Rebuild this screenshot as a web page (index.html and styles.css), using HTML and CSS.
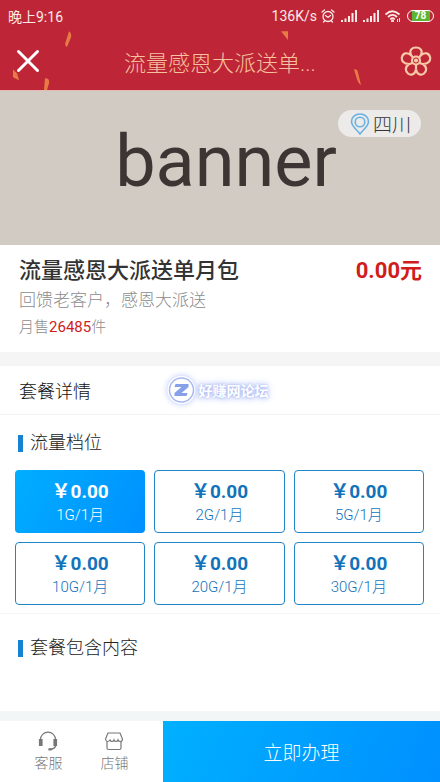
FILE: index.html
```html
<!DOCTYPE html>
<html lang="zh-CN">
<head>
<meta charset="utf-8">
<meta name="viewport" content="width=device-width, initial-scale=1">
<title>流量感恩大派送单月包</title>
<link rel="stylesheet" href="styles.css">
</head>
<body>
<header class="top">
  <svg class="confetti" viewBox="0 0 440 92" preserveAspectRatio="none" aria-hidden="true">
    <path d="M69 32q3 2 2 6l-4 10q-3-2-1-6zM13 71l4 4 2 7-6-3zM45 80q5 0 4 5l-2 7h-3zM281 32h7v9zM354 71q3-1 4 3l3 13q-3-2-4-6z"/>
  </svg>
  <div class="status">
    <span>晚上9:16</span>
    <div class="indicators">
      <span>136K/s</span>
      <svg width="14" height="14" viewBox="0 0 14 14" fill="none" stroke="currentColor" stroke-width="1.300" stroke-linecap="round" aria-hidden="true"><circle cx="7" cy="7.5" r="5"/><path d="M1 3l2.500-2M13 3l-2.500-2M4.500 6.500L7 8.500l2.500-2M3.500 12l-1 1M10.500 12l1 1"/></svg>
      <svg width="16" height="12" viewBox="0 0 16 12" fill="currentColor" aria-hidden="true"><path d="M0 10h2v2H0zM3.500 8.500h2V12h-2zM7 6h2v6H7zM10.500 3h2v9h-2zM14 0h2v12h-2z"/></svg>
      <svg width="16" height="12" viewBox="0 0 16 12" fill="currentColor" aria-hidden="true"><path d="M0 10h2v2H0zM3.500 8.500h2V12h-2zM7 6h2v6H7zM10.500 3h2v9h-2zM14 0h2v12h-2z"/></svg>
      <svg width="16" height="12" viewBox="0 0 16 12" fill="none" stroke="currentColor" stroke-width="1.800" aria-hidden="true"><path d="M.5 4.500Q7.500-2 14.500 4.500M3 7q4.500-4.200 9 0M5.300 9.300q2.200-2 4.400 0"/><circle cx="7.500" cy="11" r=".6"/><path stroke-width="1" d="M12.500 9v3M14.500 8v4"/></svg>
      <span class="battery">78</span>
    </div>
  </div>
  <div class="nav">
    <button class="icon-button" aria-label="关闭">
      <svg width="24" height="24" viewBox="0 0 24 24" fill="none" stroke="#fff" stroke-width="3" stroke-linecap="round"><path d="M2.500 2.500l19 19M21.500 2.500l-19 19"/></svg>
    </button>
    <h1>流量感恩大派送单...</h1>
    <button class="icon-button" aria-label="更多">
      <svg width="32" height="30" viewBox="0 0 32 30" fill="none" stroke="#f8c9a6" stroke-width="2.200"><path d="M11 9C9 4 12 1.500 16 1.500S23 4 21 9C25 6 29 7 30 11s-2 7-7 7c4 3 4 7 1 9.500s-7 1-8-4c-1 5-5 6.500-8 4S5 21 9 18c-5 0-8-3-7-7s5-5 9-2z"/><path d="M11 9l2 3M21 9l-2 3M23 18l-4-1M16 23.500V19M9 18l4-1"/><circle cx="16" cy="14.500" r="4"/><circle cx="16" cy="14.500" r="1"/></svg>
    </button>
  </div>
</header>

<main>
  <section class="banner">
    <span class="banner-text">banner</span>
    <button class="region">
      <svg width="20" height="22" viewBox="0 0 20 22" fill="none" stroke="#6ab2e2" stroke-width="1.600" aria-hidden="true"><path d="M10 21C7 16.500 1.500 13.500 1.500 8.500a8.500 7.500 0 0 1 17 0C18.500 13.500 13 16.500 10 21z"/><circle cx="10" cy="9" r="4.800"/></svg>
      四川
    </button>
  </section>

  <section class="summary">
    <div class="summary-head">
      <h2>流量感恩大派送单月包</h2>
      <strong class="price">0.00元</strong>
    </div>
    <p class="slogan">回馈老客户，感恩大派送</p>
    <p class="sales">月售<em>26485</em>件</p>
  </section>

  <section class="details">
    <div class="details-head">
      <h2>套餐详情</h2>
      <div class="watermark">
        <svg width="28" height="28" viewBox="0 0 28 28" aria-hidden="true"><circle cx="14" cy="14" r="12" fill="#fff" stroke="#a9b8f2" stroke-width="1.500"/><path d="M8 8h13v3l-7 6h6l-1 3H7v-3l7-6H7z" fill="#86a0ea"/></svg>
        <span>好赚网论坛</span>
      </div>
    </div>
    <div class="block">
      <h3>流量档位</h3>
      <div class="tiers">
        <button class="tier selected" aria-pressed="true"><b>￥0.00</b><span>1G/1月</span></button>
        <button class="tier"><b>￥0.00</b><span>2G/1月</span></button>
        <button class="tier"><b>￥0.00</b><span>5G/1月</span></button>
        <button class="tier"><b>￥0.00</b><span>10G/1月</span></button>
        <button class="tier"><b>￥0.00</b><span>20G/1月</span></button>
        <button class="tier"><b>￥0.00</b><span>30G/1月</span></button>
      </div>
    </div>
    <div class="block">
      <h3>套餐包含内容</h3>
    </div>
  </section>
</main>

<footer class="actions">
  <div class="links">
    <a href="#service">
      <svg width="20" height="20" viewBox="0 0 20 20" fill="none" stroke="currentColor" stroke-width="1.200" aria-hidden="true"><path d="M2.500 9C2.500-1.500 17.500-1.500 17.500 9M18 14q-1 4-6 4.500"/><path fill="currentColor" d="M1.500 8.500h2.500v6H1.500zM16 8.500h2.500v6H16zM11 17.800h2v1h-2z"/></svg>
      客服
    </a>
    <a href="#shop">
      <svg width="20" height="20" viewBox="0 0 20 20" fill="none" stroke="currentColor" stroke-width="1.200" aria-hidden="true"><path d="M4 2h12l2.500 6q0 2.500-2 2.500T14 9q-.5 1.500-2 1.500T10 9q-.5 1.500-2 1.500T6 9q-1 1.500-2.500 1.500t-2-2.500zM3 10.500V17q0 1.500 1.500 1.500h11q1.500 0 1.500-1.500v-6.500"/></svg>
      店铺
    </a>
  </div>
  <button class="order">立即办理</button>
</footer>
</body>
</html>
```
FILE: styles.css
```css
* {
  box-sizing: border-box;
}

body {
  margin: 0;
  min-height: 100vh;
  display: flex;
  flex-direction: column;
  background: #fff;
  color: #333;
  font-family: Roboto, "Noto Sans CJK SC", sans-serif;
  font-weight: 300;
}

button {
  margin: 0;
  padding: 0;
  border: 0;
  background: none;
  color: inherit;
  font: inherit;
}

h1, h2, h3, p {
  margin: 0;
}

svg {
  display: block;
  flex: none;
}

.top {
  position: relative;
  background: #be2637;
  border-bottom: 1px solid #e4b9b4;
}

.confetti {
  position: absolute;
  width: 100%;
  height: 100%;
  fill: #e77b45;
}

.status {
  position: relative;
  display: flex;
  justify-content: space-between;
  align-items: center;
  height: 31px;
  padding: 0 6px 0 8px;
  color: #fbe9e8;
  font-size: 14px;
  font-weight: 400;
}

.indicators {
  display: flex;
  align-items: center;
  gap: 6px;
}

.indicators > :first-child {
  margin-right: -2px;
}

.battery {
  width: 27px;
  border: 1px solid #fff;
  border-radius: 6px;
  background: linear-gradient(90deg, #be2637 4px, #5cb531 4px 22px, #be2637 22px);
  color: #fff;
  font-size: 10px;
  font-weight: 700;
  line-height: 10px;
  text-align: center;
}

.nav {
  position: relative;
  display: flex;
  justify-content: space-between;
  align-items: center;
  height: 59px;
  padding: 0 8px 0 16px;
}

.nav h1 {
  color: #f6c19f;
  font-size: 22px;
  font-weight: 300;
}

.banner {
  position: relative;
  display: flex;
  justify-content: center;
  height: 154px;
  padding: 31px 0 0 12px;
  background: #d1cbc3;
}

.banner-text {
  color: #3c3534;
  font-size: 72px;
  font-weight: 400;
  line-height: 80px;
}

.region {
  position: absolute;
  top: 19px;
  right: 19px;
  display: flex;
  align-items: center;
  gap: 3px;
  height: 27px;
  padding: 0 10px 0 12px;
  border-radius: 14px;
  background: #ecebe9;
  font-size: 19px;
}

.summary {
  padding: 11px 18px 11px 19px;
  border-bottom: 14px solid #f5f5f5;
}

.summary-head {
  display: flex;
  justify-content: space-between;
  align-items: center;
  line-height: 30px;
}

.summary h2 {
  font-size: 22px;
  font-weight: 500;
}

.price {
  color: #d01c1c;
  font-size: 22px;
  font-weight: 700;
}

.slogan {
  color: #8c8c8c;
  font-size: 17px;
  line-height: 28px;
}

.sales {
  color: #8c8c8c;
  font-size: 15px;
  line-height: 27px;
}

.sales em {
  color: #d01c1c;
  font-style: normal;
  font-weight: 400;
}

.details {
  display: flex;
  flex-direction: column;
}

.details-head {
  position: relative;
  display: flex;
  align-items: center;
  height: 49px;
  padding: 0 19px;
  border-bottom: 1px solid #f2f2f2;
}

.details-head h2 {
  color: #111;
  font-size: 18px;
  font-weight: 300;
}

.watermark {
  position: absolute;
  left: 50%;
  transform: translateX(-50%);
  display: flex;
  align-items: center;
  gap: 3px;
  margin-left: -2px;
  color: #fff;
  font-size: 14px;
  font-weight: 700;
  text-shadow: 0 0 2px #a5b5f2, 0 0 5px #a5b5f2, 0 0 10px #b5c2fa;
}

.watermark svg {
  border-radius: 50%;
  box-shadow: 0 0 6px #b5c2fa;
}

.block {
  padding: 15px 16px 8px 15px;
}

.block + .block {
  padding-top: 21px;
  border-top: 1px solid #f5f5f5;
}

.block h3 {
  display: flex;
  align-items: center;
  gap: 7px;
  padding-left: 3px;
  color: #222;
  font-size: 18px;
  font-weight: 300;
  line-height: 26px;
}

.block h3::before {
  content: "";
  width: 5px;
  height: 17px;
  background: #1782d2;
}

.tiers {
  display: grid;
  grid-template-columns: repeat(3, 1fr);
  gap: 9px;
  margin-top: 14px;
}

.tier {
  display: flex;
  flex-direction: column;
  align-items: center;
  justify-content: center;
  height: 63px;
  padding-top: 2px;
  border: 1px solid #2384c6;
  border-radius: 4px;
  color: #1273bb;
  font-size: 15px;
  line-height: 22px;
}

.tier b {
  font-size: 19px;
  font-weight: 700;
  line-height: 24px;
}

.tier.selected {
  border-color: transparent;
  background: linear-gradient(120deg, #00aeff, #0090ff) border-box;
  color: #fff;
}

.actions {
  display: flex;
  height: 71px;
  margin-top: auto;
  border-top: 10px solid #f3f6f6;
}

.links {
  flex: 37;
  display: flex;
  justify-content: center;
  gap: 38px;
  padding-top: 10px;
}

.links a {
  display: flex;
  flex-direction: column;
  align-items: center;
  gap: 2px;
  color: #777;
  font-size: 14px;
  line-height: 20px;
  text-decoration: none;
}

.order {
  flex: 63;
  background: linear-gradient(110deg, #00b0ff, #0090ff);
  color: #fff;
  font-size: 19px;
}
```
